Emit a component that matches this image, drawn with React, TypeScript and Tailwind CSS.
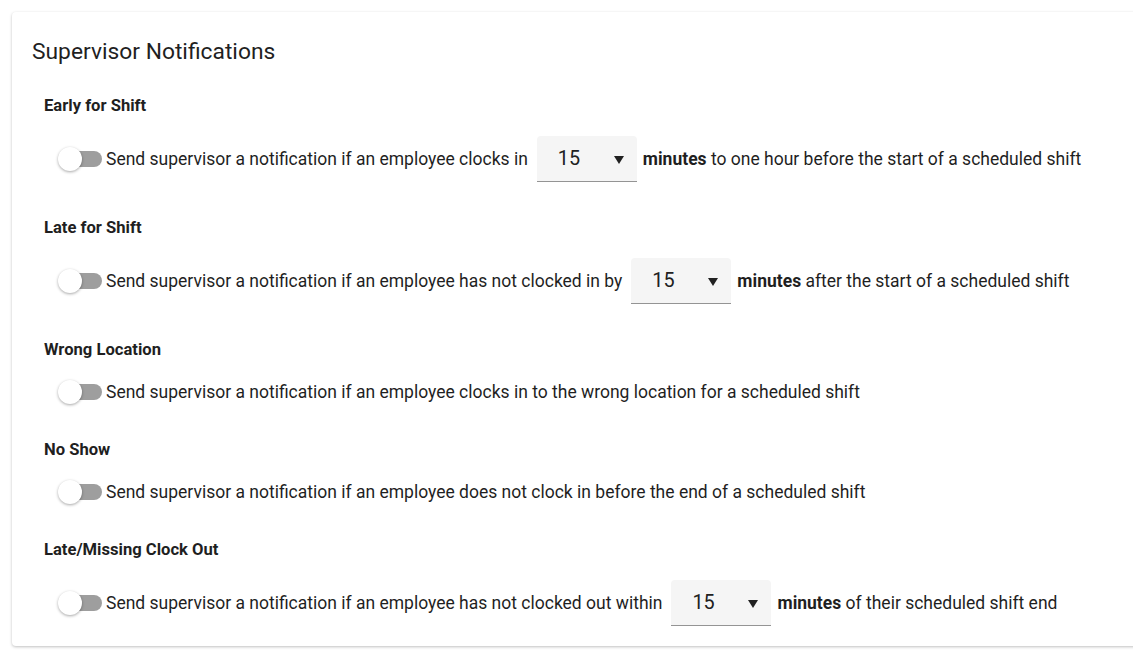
import React, { useState } from 'react';

interface Rule {
  title: string;
  before: string;
  after?: string;
  hasSelect: boolean;
}

const rules: Rule[] = [
  {
    title: 'Early for Shift',
    before: 'Send supervisor a notification if an employee clocks in',
    after: 'to one hour before the start of a scheduled shift',
    hasSelect: true,
  },
  {
    title: 'Late for Shift',
    before: 'Send supervisor a notification if an employee has not clocked in by',
    after: 'after the start of a scheduled shift',
    hasSelect: true,
  },
  {
    title: 'Wrong Location',
    before: 'Send supervisor a notification if an employee clocks in to the wrong location for a scheduled shift',
    hasSelect: false,
  },
  {
    title: 'No Show',
    before: 'Send supervisor a notification if an employee does not clock in before the end of a scheduled shift',
    hasSelect: false,
  },
  {
    title: 'Late/Missing Clock Out',
    before: 'Send supervisor a notification if an employee has not clocked out within',
    after: 'of their scheduled shift end',
    hasSelect: true,
  },
];

function Toggle({ on, onChange }: { on: boolean; onChange: () => void }) {
  return (
    <button
      onClick={onChange}
      className="relative flex h-6 w-[44px] shrink-0 items-center"
      aria-label="Toggle notification"
    >
      <span className={`absolute right-0 h-4 w-[36px] rounded-full ${on ? 'bg-[#90caf9]' : 'bg-[#9e9e9e]'}`} />
      <span
        className={`absolute top-0 h-6 w-6 rounded-full shadow-[0_1px_3px_rgba(0,0,0,0.35)] ${on ? 'left-[20px] bg-[#1976d2]' : 'left-0 bg-white'}`}
      />
    </button>
  );
}

function MinuteSelect() {
  return (
    <div className="relative ml-[9px] mr-[6px] flex h-[46px] w-[100px] shrink-0 items-center rounded-t bg-[#f5f5f5] border-b border-[#949494]">
      <span className="pl-[21px] text-[19.8px] text-[#212121]">15</span>
      <svg className="absolute right-[13px] top-[20px] h-[8px] w-[10px]" viewBox="0 0 10 8">
        <path d="M0 0h10L5 8z" fill="#212121" />
      </svg>
    </div>
  );
}

export default function App() {
  const [enabled, setEnabled] = useState<boolean[]>(rules.map(() => false));

  return (
    <div className="min-h-screen bg-white pl-3 pt-3 font-['Roboto',sans-serif] text-[#1f1f1f]">
      <div className="w-[1140px] rounded bg-white px-5 pb-5 pt-[26px] shadow-[0_1px_3px_rgba(0,0,0,0.25)]">
        <h1 className="text-[22.8px] leading-7">Supervisor Notifications</h1>
        <div className="mt-[30px] flex flex-col gap-9 pl-3">
          {rules.map((rule, i) => (
            <div key={rule.title}>
              <h2 className="text-[16.6px] font-bold leading-5">{rule.title}</h2>
              <div className="mt-5 flex min-h-6 items-center pl-[14px] text-[17.5px] leading-6">
                <Toggle
                  on={enabled[i]}
                  onChange={() => setEnabled(prev => prev.map((v, j) => (j === i ? !v : v)))}
                />
                <span className="ml-1">{rule.before}</span>
                {rule.hasSelect && (
                  <>
                    <MinuteSelect />
                    <span>
                      <b className="font-bold">minutes</b> {rule.after}
                    </span>
                  </>
                )}
              </div>
            </div>
          ))}
        </div>
      </div>
    </div>
  );
}
